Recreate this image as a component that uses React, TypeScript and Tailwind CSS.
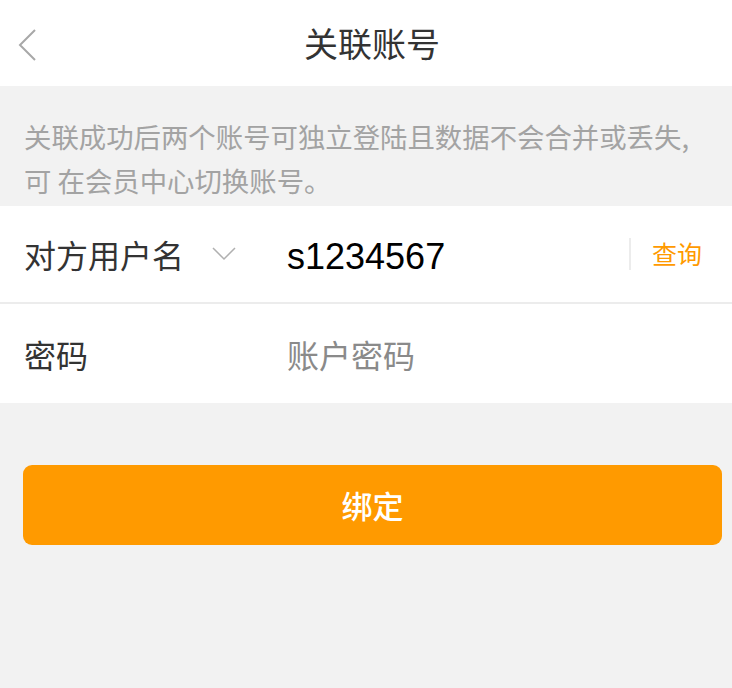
import React from "react";

const font = { fontFamily: '"Noto Sans CJK SC", "Noto Sans", sans-serif' };

export default function App() {
  return (
    <div className="w-[732px] h-[688px] bg-[#f2f2f2] flex flex-col" style={font}>
      <div className="h-[86px] bg-white relative flex items-center justify-center pl-[12px]">
        <svg className="absolute left-[16px] top-[28px]" width="22" height="34" viewBox="0 0 22 34">
          <polyline points="19,2 4,17 19,32" fill="none" stroke="#a8a8a8" strokeWidth="2" />
        </svg>
        <span className="text-[34px] text-[#333] leading-none">关联账号</span>
      </div>
      <div className="px-[24px] pt-[28px] pb-[4px] text-[27.4px] leading-[44px] text-[#a3a3a3] whitespace-nowrap">
        <div>关联成功后两个账号可独立登陆且数据不会合并或丢失,</div>
        <div>可 在会员中心切换账号。</div>
      </div>
      <div className="bg-white">
        <div className="h-[98px] flex items-center border-b-2 border-[#ececec]">
          <span className="ml-[24px] w-[160px] text-[32px] text-[#333]">对方用户名</span>
          <svg className="ml-[28px]" width="24" height="14" viewBox="0 0 24 14">
            <polyline points="1,1 12,12 23,1" fill="none" stroke="#b0b0b0" strokeWidth="1.5" />
          </svg>
          <span className="ml-[51px] mt-[6px] text-[36px] text-black leading-none" style={{ fontFamily: '"Liberation Sans", Arial, sans-serif' }}>s1234567</span>
          <div className="ml-auto w-[2px] h-[32px] bg-[#ececec]" />
          <span className="ml-[21px] mr-[30px] text-[25px] text-[#ff9a00]">查询</span>
        </div>
        <div className="h-[99px] flex items-center">
          <span className="ml-[24px] w-[263px] text-[32px] text-[#333]">密码</span>
          <span className="text-[32px] text-[#8a8a8a]">账户密码</span>
        </div>
      </div>
      <div className="ml-[23px] mr-[10px] mt-[62px] h-[80px] rounded-[9px] bg-[#ff9a00] flex items-center justify-center">
        <span className="text-[31px] text-white font-medium">绑定</span>
      </div>
    </div>
  );
}
